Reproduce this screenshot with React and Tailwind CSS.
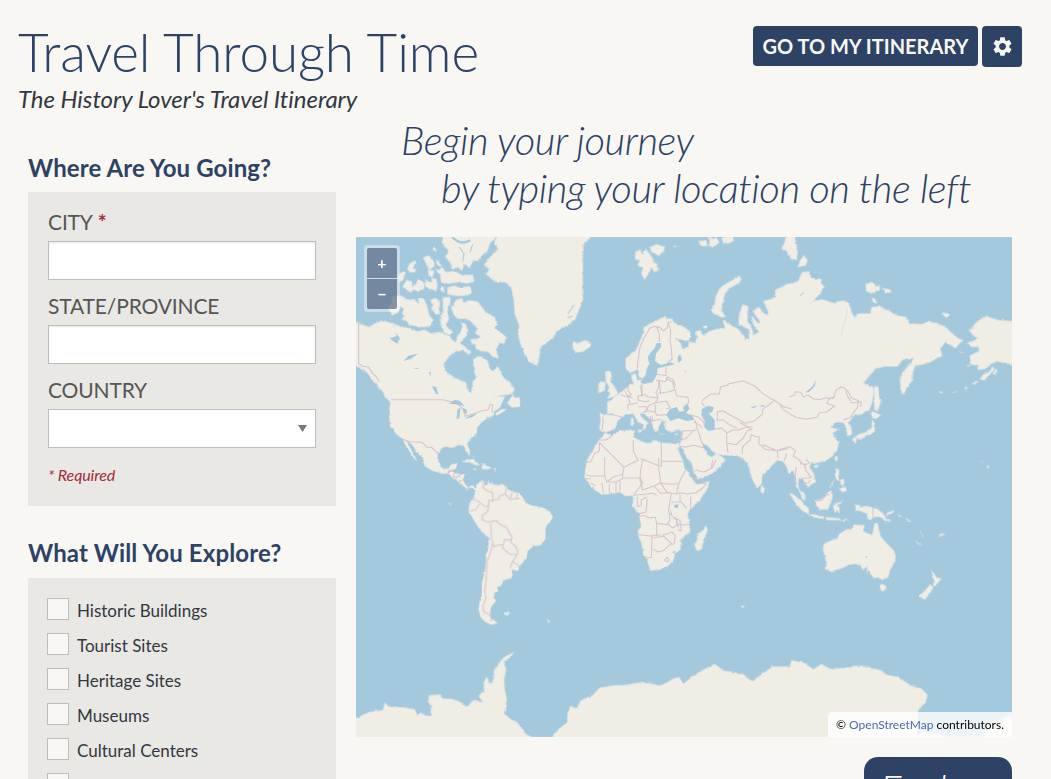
import React from "react";
import { MdSettings } from "react-icons/md";

const LAND = "#f0ede5";
const SEA = "#a5c9dc";

function WorldMap() {
  return (
    <svg viewBox="0 0 1968 1500" className="block h-[500px] w-[656px]" aria-hidden="true">
      <defs>
        <filter id="coast" x="0" y="0" width="1968" height="1500" filterUnits="userSpaceOnUse">
          <feTurbulence type="fractalNoise" baseFrequency="0.07" numOctaves="2" seed="4" />
          <feDisplacementMap in="SourceGraphic" scale="8" xChannelSelector="R" yChannelSelector="G" />
        </filter>
      </defs>
      <rect width="1968" height="1500" fill={SEA} />

      <g filter="url(#coast)" fill={LAND} stroke={LAND} strokeWidth="1" strokeLinejoin="round">
        {/* Canada, Greenland and the Arctic islands */}
        <path d="M-10 256L8 256 22 264 40 270 52 262 78 250 88 254 100 257 118 262 140 270 165 275 185 284 205 278 225 290 245 286 262 288 280 298 292 312 300 316 303 300 312 290 320 270 315 255 330 262 333 285 325 305 310 318 335 335 345 345 340 352 320 340 300 342 275 360 263 385 268 403 300 425 330 437 334 460 345 470 350 435 360 422 354 395 352 368 365 358 380 360 393 368 400 390 410 402 425 388 434 408 446 426 460 434 475 455 470 470 440 475 410 480 395 500 390 520 100 520 104 496 90 482 80 466 70 455 60 440 48 428 36 410 22 396 -10 382Z" />
        <path d="M430-10L415 12 426 36 402 60 384 84 402 96 388 110 402 122 420 134 450 136 466 154 474 190 476 230 490 266 486 290 492 316 506 350 520 374 543 386 548 368 555 328 572 316 590 304 602 282 632 266 656 250 680 190 680-10Z" />
        <path d="M262-10L258 20 278 40 268 60 284 78 288 96 305 90 318 100 326 80 340 92 352 70 368 72 380 52 392 45 402 20 418 0 425-10Z" />
        <path d="M252 92l20 14 24-4 20 12 34 0 4 20-20 4-30-2-30 4-20-14zM275 152l20-6 14 6 34-4 4 22-22 6-26 0-24-4zM254 122l14 4 0 14-12-4zM254 148l12 4 0 14-12-6z" />
        <path d="M205 60l10-4 16 14 4 18-14 8-12-16zM240 70l10 4 8 14-14-4zM233 30l8 4-2 10-8-6zM154 96l8-18 14-6 4 8-10 12 10 12-18 2zM218 96l16 6-4 18-12-4zM240 96l18 6 2 8-14-2z" />
        <path d="M132 108l14-2-4 22-14 10 0-18zM140 148l12-18 16 4 0 16 14-10 4-14 18 14 0 16-16 8-14-6-14 6zM208 128l12 8 10-2-4-12 14 4 4 20-4 16-12-6-14-4-8-12z" />
        <path d="M96 212l10-14 4-20 26-2 12 10-14 22-8 18-16 10zM132 204l18-16 24 0 16 14-4-20 16 2 10 20 6 26 12 18-6 18-20 4-24-2-20-6-8-10-16-6 10-8-8-10 6-12z" />
        <path d="M222 190l18-6 12 10-4 22 4 14-12 2-14-18 6-10zM260 182l22-2 0 22-8 18 4 26-8 16 8 14 12 8-8 10-18-8-10-22 2-26 6-20z" />
        <path d="M292 202l10-14 16-4 4 14 16-8 26 4 12 14 14 18 26 16 6 22-8 8 22 16 16 14-8 18-14-4-10 22-2 22-10-2-18-22-20-12-22-4-4-14 20 2 10-10-16-8 6-16-20-22-16-8-22 2-12-12-8-22z" />
        <path d="M360 318l22 8 18 12 20 4 8 22-14-4-18-16-20-2-18-8z" />
        <path d="M322 270l10 8-4 22-12 12-10-4 6-18zM456 500l16-28 4 14 16 4-4 18-20 4z" />

        {/* Eurasia, north-west */}
        <g transform="translate(660 0)">
          <path d="M164 408L150 396 149 365 165 350 180 340 190 315 205 285 202 272 220 262 240 250 265 240 285 246 296 258 320 268 340 282 346 298 332 312 312 306 298 300 312 318 320 336 338 332 338 314 356 318 366 302 358 284 372 280 380 296 400 284 420 276 448 274 440 250 466 266 486 276 500 292 508 306 520 302 516 276 490 262 488 238 500 203 516 208 514 250 526 272 534 294 550 285 532 262 526 235 548 262 552 254 530 222 548 210 574 238 578 226 562 192 595 185 600 158 640 140 680 137 680 530 94 530 94 496 118 492 136 474 152 464 156 448 172 446 168 428 166 414 180 410 184 438 200 442 220 400 200 424 190 420 186 396Z" />
          <path d="M0-10L44-10 40 6 24 18 18 44 4 60 18 82 20 106 2 124 16 142 14 160 4 190-10 200-10-10Z" />
          <path d="M-8 314l14 4 22-8 14 6 2 12-24 16-20 2-12-14zM88 404l14-2 6 20-4 12 14 20 8 16-8 8-24 6 8-14-6-10 4-8-10-20zM68 438l20-4-2 26-20 8 2-14z" />
          <path d="M178 44l14-4 8 10 10-14 8 12 12 16 0 12 12 4 8 20-16 4-8-14-8 18-10 20-12-18 4-14-14-12 4-14-12-4zM222 30l18-8 26 6-2 16-16 12-22-12zM292 28l8-2-2 4zM368 14l22-4 4 16-16 2zM400 8l22-6 8 14-18 14-14-4 4-8zM440 2l30-4 2 14-18 8-14 2zM394 4l10-4 4 8z" />
          <path d="M404 222l12-20 4-26 14-24 24-16 28-16 10 4-4 12-30 16-14 16-8 24-4 26 12 22-12 0-18-8zM384 264l8 2-2 8-8-2z" />
          <path d="M632-5l22 0 8 30 0 44-24-14-6-14-14-4 8-22z" />
        </g>

        {/* Eurasia, north-east, and western Alaska */}
        <g transform="translate(1308 0)">
          <path d="M-20 142L0 142 20 130 30 106 48 104 60 124 86 126 94 150 84 172 52 204 66 192 90 188 130 200 150 190 172 198 178 225 188 242 200 230 235 230 238 212 260 208 290 220 310 235 342 240 352 260 392 262 405 255 435 258 460 270 490 298 510 310 492 333 460 315 444 335 450 356 405 380 370 385 362 405 362 430 345 450 335 472 326 455 324 425 336 402 355 378 368 360 350 368 332 368 316 388 280 388 250 395 214 438 240 448 243 470 232 520-20 520Z" />
          <path d="M680 254L622 250 590 240 575 240 550 258 544 270 530 278 546 298 560 304 526 318 540 330 560 328 562 342 534 356 536 382 560 384 556 398 578 396 600 380 620 372 640 380 680 382Z" />
          <path d="M-4 0l8 30 12 10-4 26-16 0zM18 90l8-22 10-14 10 18-6 14zM222 140l18-4 10 8 14 2-2 14-20 10-20-8zM272 154l22 4 4 8-18 0zM240 182l10 6 6 10-12-2zM448 232l16-4 10 6-10 8zM502 344l12 4-8 2zM246 452l10 0 2 30 8 10-8 30-10-4z" />
          <path d="M562 424l14-12 18-10 6-12 6 8-18 20-12 12zM604 408l6-12 6 4-4 14zM540 440l14-6 6 2-14 6zM518 454l10-4-6 8zM528 384l8 2-8 2zM480 466l8-2 6-2-8 4zM440 464l14 2-8 2z" />
        </g>

        {/* United States, Central America, Caribbean and South America */}
        <g transform="translate(0 489)">
          <path d="M104-10L106 10 100 50 103 80 124 105 140 116 148 132 160 152 172 172 182 182 170 158 160 140 150 120 168 134 182 154 202 176 206 198 230 212 260 221 278 220 286 230 300 236 306 246 320 256 332 266 345 262 355 268 358 290 368 278 350 256 336 263 325 250 320 240 325 224 312 222 298 220 290 212 300 204 304 190 285 193 278 206 262 207 250 196 244 168 250 150 265 140 290 143 310 134 325 138 330 154 341 166 341 150 332 130 345 115 365 100 362 85 375 68 398 52 415 44 412 36 432 22 446-10Z" />
          <path d="M358 265L366 252 384 243 386 260 396 246 404 252 430 256 440 252 452 266 470 276 492 280 505 300 508 308 525 316 556 322 580 334 590 350 584 364 568 384 568 410 556 434 532 438 514 454 512 474 496 492 486 512 464 508 470 522 466 534 440 542 438 556 424 560 426 574 416 578 412 592 420 602 404 622 402 642 406 656 424 668 410 674 390 668 374 652 368 628 372 600 378 588 378 550 388 510 392 470 398 440 398 412 376 394 360 370 346 346 338 336 340 312 352 298 358 290Z" />
          <path d="M318 184l16-6 22 4 16 14-16-2-14-8-14 0zM376 202l8-8 18 8 2 4-26 2zM352 206l10 2-4 2zM412 206l8 0-2 4zM444 638l18 0-6 6-10 0zM576 658l8 8-4 2zM278 312l8 0-4 4zM418 40l18-12 16 0-14 10-16 8zM460 0l8-10 22 0 2 30-16-6-16-2zM350 166l4 8zM372 190l10 6z" />
        </g>

        {/* Europe, Middle East, India and Africa */}
        <g transform="translate(642 429)">
          <path d="M118 64L130 70 132 106 90 102 92 120 88 150 106 156 122 152 136 144 140 128 152 112 168 104 184 96 194 108 205 124 222 136 218 150 226 146 230 132 236 130 218 116 206 98 205 86 216 90 226 104 240 116 246 130 255 155 264 152 266 140 274 126 286 122 286 148 306 156 320 152 336 152 332 186 328 196 340 208 350 232 366 252 372 280 380 298 402 292 426 280 450 262 466 240 450 228 440 220 424 232 410 222 396 194 410 194 428 214 450 224 475 226 502 226 518 236 528 246 536 250 540 275 550 305 562 323 575 310 576 286 600 262 622 240 640 246 655 265 670 270 670 0 200 0Z" />
          <path d="M104 160L125 165 150 153 194 150 190 172 202 180 240 193 250 180 275 188 300 190 325 190 328 206 320 200 335 235 345 265 360 285 372 304 380 314 418 304 410 330 385 365 362 385 352 402 358 430 360 455 330 480 332 508 315 520 310 540 290 562 265 568 241 572 235 545 220 520 215 490 204 465 212 430 206 400 189 380 190 346 166 348 150 336 120 342 95 343 70 325 50 302 45 285 50 240 70 210 86 182Z" />
          <path d="M406 438l6 14-10 28-8 28-14 4-6-18 8-14 0-18 16-10zM574 316l10 10-4 12-8-4zM184 114l6 0 0 22-8 0zM200 150l16 0-4 8zM266 162l16 0zM314 162l10-2-8 6zM512 678l12 0-6 5z" />
        </g>

        {/* South-east Asia and Oceania */}
        <g transform="translate(1272 459)">
          <path d="M-10 200L5 200 16 218 26 250 40 240 46 262 48 290 60 304 66 326 76 330 74 312 58 298 54 284 56 262 70 270 82 292 104 276 102 252 88 232 94 216 116 218 150 206 170 184 176 158 162 136 158 126 178 118 150 112 170 96 190 98 200 116 202 138 216 134 214 114 206 96 224 76 248 72 276 40 280-10-10-10Z" />
          <path d="M28 310l14 4 22 20 22 22 0 16-18-8-22-26zM84 374l20 0 28 6 0 6-26-4zM136 382l20 2 26 2 0 4-42 0zM186 392l16-6-8 8zM104 332l20-4 14-14 12-12 8 14-6 24-8 18-24 0-10-10zM162 342l30-8-22 12 8 8 0 16-8-12-4 10-6-16z" />
          <path d="M226 344l14 2 0 8 14-6 22 4 16 6 14 10 14 18 12 10-14-2-18-14-16 0-10 8-12-2 0-14-22-10-12 0zM318 370l22-8 2 4-16 8zM354 372l12 6-8 0zM376 384l16 10-6 0zM406 452l16 12-6-2zM420 420l10 22zM476 438l10-8 6 2-14 8z" />
          <path d="M167 236l10 2-2 24 10 10-14-2-6-14zM182 268l10 6 0 14-10-6zM176 298l20-8 4 12-12 4zM150 290l12-20-8 20zM166 198l8 2-4 14-6-6zM104 224l10 0-4 10-8-4z" />
          <path d="M275 64l16 6 12 6-16 10-14-4zM276 90l8 10 0 24-14 10-20 6-12 8-14-8 20-10 18-4 14-14zM220 142l10 4-4 14-8-8zM236 142l10-2-6 8zM284-10l10 0 4 40-6 30-6-4zM362-6l12 0-6 16z" />
          <path d="M130 462L158 450 172 446 178 432 200 418 216 418 222 404 254 406 248 422 276 438 284 400 292 402 302 440 320 460 344 486 347 510 330 540 324 562 308 568 292 562 278 564 266 542 258 550 264 528 250 540 238 522 210 522 188 534 150 544 138 536 140 518 130 484ZM300 584l18 2-2 12-10 6-6-10zM454 542l10 12 6 10 14 2-18 20-6-2 2-14zM450 586l10 4-12 22-14 16-16-6 10-14z" />
          <path d="M604 214l6 2zM622 226l8 6-8 2z" />
        </g>

        {/* Antarctica */}
        <g transform="translate(0 1149)">
          <path d="M-10 294L8 292 40 276 82 270 86 248 98 260 140 262 176 268 184 290 194 278 206 286 224 288 226 258 216 244 220 226 254 224 258 236 290 238 312 246 334 260 352 240 382 248 368 228 384 212 384 184 394 174 402 192 414 176 414 152 434 124 450 108 474 98 462 112 442 126 450 146 444 180 446 210 452 238 444 280 464 298 484 308 510 344 530 352 588 352 610 326 634 308 634 290 640 262 662 264 676 240 710 226 730 204 776 196 800 196 856 188 914 196 934 188 948 178 966 172 986 188 1040 150 1076 132 1102 152 1160 162 1188 184 1210 168 1250 140 1302 140 1306 122 1342 128 1372 148 1396 132 1420 146 1480 144 1490 138 1530 138 1576 152 1590 164 1626 172 1670 200 1696 206 1714 224 1708 248 1686 270 1682 370-10 370Z" />
          <path d="M1682 352L1700 334 1760 348 1880 352 1900 310 1960 290 1980 300 1980 370 1682 370Z" />
        </g>
      </g>

      {/* Enclosed seas and lakes */}
      <g fill={SEA} stroke="none">
        <path d="M902 318L915 318 915 330 900 350 897 372 915 384 945 376 956 382 930 388 905 394 902 414 890 436 864 441 852 436 868 420 872 395 880 380 875 360 885 345 895 335ZM100 304l22-6-4-12 14 18-8 16-10-6zM142 372l16-16 28-6-22 16zM228 448l10 20 10 6-8-24zM218 406l6 12 0-14zM170 396l20-4-4 4z" />
        <path d="M280 500l16-12 16 4 14 16-26-6zM302 546l2-28 10-8-4 34zM320 512l12 6 0 14-8-6zM326 546l12-8 26-10-14 12z" />
        <path d="M930 534l12-18 20-6 8 14 16-2-6-10 16-10 4 14-10 12 18 8 8 12-24 4-26-8-22 8zM1038 516l18-10 18 4-6 16-10 2 18 22 0 28-18 4-12-10 0-20-10-18zM954 804l14-2-2 12-10-2zM944 818l6 20-6-4zM964 850l6 26-6-10zM1348 466l22-18 10-20-4 20-18 18zM972 350l6 18-10 10-4-16zM986 400l6 4-4 2zM1528 956l6 2-2 6zM1184 510l22-4-14 8zM1208 506l20-2-8 6z" />
        <path d="M285-4q28 32 58 14" fill="none" stroke={SEA} strokeWidth="7" />
        <path d="M1332 176l12-10M654 204l-18 26M650 238l-16 4M310 30l14 20-4 24M350 22l-8 24" fill="none" stroke={SEA} strokeWidth="3" />
        <path d="M1474 216l-2 20-12 36-4 26" fill="none" stroke={SEA} strokeOpacity=".5" strokeWidth="2" />
      </g>

      {/* National borders */}
      <g fill="none" stroke="#c9adc0" strokeOpacity=".65" strokeWidth="3.2" strokeLinejoin="round">
        <path d="M8 258V380L20 388 38 390 48 408 60 418 70 434M106 488H262L300 498 318 512 328 538 348 532 376 522 396 518 402 502 410 504 408 528" />
        <path d="M140 607L162 614 198 616 214 632 226 630 246 650M276 708l6-6 14 0-4 16M290 720l14 0 20-14M306 734l12-4" />
        <g transform="translate(0 489)">
          <path d="M384 246l-4 16 12 10 18 6 0 26-12-4 0 20-14-2-14-12-16-8M410 300l18-2 2-10 18-6 4-16M448 282l14 16 30-2M468 278l-4 18M484 280l-2 16M340 334l20-6 10-16M398 320l-4 16-16 10 2 14 16 6 26-4 8 10 22 10 8 18 8 8-2 12-20-2-4 16-20 2-8 4-8-26-2-44M410 432l-8 30-8 20-4 60-4 30 4 20-10 30 4 14 18 8 4 20M464 418l2 10 16 14 4 20-22 2-22-18-4-12M484 462l-14 22 22 16M470 484l-8 20M276 218l6-8 16 4" />
        </g>
        <g transform="translate(642 429)">
          <path d="M88 180h20l20-14-4-14M88 188l74 74 42-22-14-26 0-34M274 186V258l-6 0-50-20-6-2M274 244h64M48 246h14l12-26 14-6V188M104 232v56H62l-14-4M104 288l6 18 22-16 28-8M162 262l-4 22 0 10h54l6 16-16 20-10 12M218 240l-6 30-2 30 8 30 34-12 20-10-6-44 0-30M272 308l16 4 38 0 10-22 12-22M252 318l20 22 26-2 20 4 12-4 22 4 24-4 18-10 14-16-22-6-10-20-20 0M272 310l20 28M326 312l-6 26M362 350l0 36M330 344l0 22-26 0M304 366l30 0 16 20M190 346l40-4 20-2 10 6M202 350l0 30 12-4 0-16 18-10M204 402l24-6 4-40M208 408h20l8 6 20-2 4 18 32 4 8-16-4-28 4-28 4-20M204 464l36 4 34-4M260 432v32M246 468l-2 64-16 2M250 474l30-6 24 22-24 22-16 4-14-8M278 466l28-10 10 10-4 26-12 0M292 430l16 14 12-8 0-16-12-10M312 412l18 10 4 30-10-2M324 434h34M284 540l8-8 6 8-6 6zM306 518l8-4 0 10M96 308l4 32M118 312l0 28M138 306l0 30M150 304l0 30M62 308l14 10M110 306l28 0 20-10M50 296h12" />
          <path d="M174 6l0 26 10 12-14 6-18-6M216 10l0 34M266 0l0 22-8 16 6 16-30-4-10-6-20 4 0 12 22 6 12-4M264 40l30-4 20-6-6-24-20-10M316 30l4 18 34 4 2 16-14 12M264 54l-8 14-18 8-14 18M256 68l34-4 10 20-12 2M232 92l24 4 0-22M256 94l4 12 28-2M246 106l2 16 26-4M174 48l6 24-8 4 4 12M176 74l28-6M206 80l24 0 4 14-16 4M98 110l2 12-4 28M134 106l20 4M182 2l8 12M240 108l6 20" />
          <path d="M360 104l26 8 14 12 4 14M376 122l6 26-14 4-30 0-4 28M370 124l20 12 6 8M384 150l10 36 10 10M334 180l16-6 20-22M330 198l14 4 26-6 34 8M376 270l26 6 24-12 12-24M424 262l4-22M396 62l26-20 26 0 4-22 22-4 0-4 46-10 20 10 14 6 24 22 24 16 10 4 28 20 24 6M394 66l10 14M442 94l0 26 18 0 18 14 24 10M442 96l16-4 28 16 40 22 28-8 24-20 0-14 22-16 10-8M434 148l20-4 16 14 0 30 4 30M470 160l18-10 18 0 20-8 22-2M472 190l26 4 22-20 12-22 16-4M516 222l2-22 22-20 4-18M544 166l24 6-2 18 20 18 34 4 34-6M580 200l0-6 36 16M622 208l2 26M510 128l20 10 16 12" />
        </g>
        <g transform="translate(660 0)">
          <path d="M184 394l2-24 6-40 12-26 18-32 16-4 14 4 10 10 12-10 2-14 12-4M242 268l8 24 0 22M276 256l8 24-2 30 4 24 2 32-14 12M270 390v26l-34-6M240 430l30 4 4-14 18 8 6 20M146 462l10 16 14 6M194 446l4 30M250 434l4 36" />
        </g>
        <g transform="translate(1308 0)">
          <path d="M-10 480L8 474 10 464 26 466 34 480 48 474 66 486 84 488 100 482 124 484 132 460 146 450 160 454 166 476 180 498 208 494 206 510" />
        </g>
        <g transform="translate(1272 459)">
          <path d="M0 42l8 16 26 16 14 8 30 6 34-6 6-14 22-2 24-18-24-8 6-12 18-6M202 0l12 24 22 8-4 20-20 28M190 90l28-10M-4 180l20-6 14-4 16 12-6 16 16 10 8 10M20 190l-8 24M48 230l-2 32 4 22M60 216l14 10 4 16 16 20-24 4M78 208l10 10-14 8M60 222l16 0M68 262l-2 14 18 4 8-10M108 334l18-4 12-16 12 0M279 352v36" />
        </g>
      </g>
    </svg>
  );
}

function TextField({ label, required }) {
  return (
    <label className="flex flex-col">
      <span className="h-[37px] pt-[5px] text-[21px] leading-[26px] tracking-[-0.15px] text-[#555] uppercase">
        {label}
        {required && <span className="font-bold text-[#a42c3a]"> *</span>}
      </span>
      <input className="h-[39px] w-full border border-[#bdbdbb] bg-white px-2 shadow-[inset_0_1px_2px_rgba(0,0,0,0.1)] outline-none" />
    </label>
  );
}

const categories = [
  "Historic Buildings",
  "Tourist Sites",
  "Heritage Sites",
  "Museums",
  "Cultural Centers",
  "Monuments",
];

export default function App() {
  return (
    <div className="h-[779px] w-[1051px] overflow-hidden bg-[#f8f7f3] font-['Lato',sans-serif] text-[#333740] [font-variant-ligatures:none]">
      <header className="flex h-[120px] items-start justify-between pr-[29px] pl-[18px]">
        <div className="pt-[21px]">
          <h1 className="h-[63px] text-[53px] leading-[62px] font-light tracking-[-0.1px] whitespace-nowrap text-[#2d4265]">Travel Through Time</h1>
          <p className="text-[24px] leading-[30px] tracking-[-0.05px] italic">The History Lover's Travel Itinerary</p>
        </div>
        <div className="flex items-start gap-1 pt-[26px]">
          <button className="h-10 w-[225px] rounded-[4px] bg-[#2d4265] text-[20px] leading-[40px] font-bold whitespace-nowrap text-[#f8f7f3]">
            GO TO MY ITINERARY
          </button>
          <button className="flex h-[41px] w-10 items-center justify-center rounded-[4px] bg-[#2d4265] text-[#f8f7f3]" aria-label="Settings">
            <MdSettings size={23} />
          </button>
        </div>
      </header>

      <main className="flex gap-5 pl-7">
        <aside className="w-[308px] pt-[32px]">
          <h2 className="h-10 text-[24px] leading-[32px] font-bold tracking-[0.1px] text-[#2d4265]">Where Are You Going?</h2>
          <section className="flex h-[314px] flex-col gap-2 bg-[#e9e8e4] px-5 pt-3">
            <TextField label="City" required />
            <TextField label="State/Province" />
            <div className="flex flex-col">
              <span className="h-[37px] pt-[5px] text-[21px] leading-[26px] tracking-[-0.15px] text-[#555]">COUNTRY</span>
              <div className="flex h-[39px] items-center justify-end border border-[#bdbdbb] bg-white pr-2">
                <svg viewBox="0 0 9 7" className="h-[7px] w-[9px] fill-[#777]"><path d="M0 0h9L4.5 7z" /></svg>
              </div>
            </div>
            <p className="pt-[9px] text-[16px] leading-[20px] tracking-[-0.1px] text-[#a42c3a] italic">* Required</p>
          </section>
          <h2 className="mt-[31px] h-[41px] text-[24px] leading-[32px] font-bold tracking-[0.12px] text-[#2d4265]">What Will You Explore?</h2>
          <section className="bg-[#e9e8e4] pt-5 pl-[19px]">
            {categories.map((name) => (
              <div key={name} className="flex h-[35px] gap-2">
                <span className="size-[22px] border border-[#bdbdbb] bg-[#f8f7f3]" />
                <span className="text-[17px] leading-[26px]">{name}</span>
              </div>
            ))}
          </section>
        </aside>

        <section className="w-[656px]">
          <div className="-mt-1 h-[121px] text-[40px] leading-[48px] font-light tracking-[-0.45px] whitespace-nowrap text-[#2d4265] italic">
            <p className="pl-[45px]">Begin your journey</p>
            <p className="pl-[85px]">by typing your location on the left</p>
          </div>
          <div className="relative h-[500px]">
            <WorldMap />
            <div className="absolute top-2 left-2 flex w-9 flex-col gap-px rounded-[4px] bg-white/40 p-[3px]">
              <button className="h-[30px] rounded-t-[2px] bg-[#2d4265]/55 text-[16px] leading-[30px] font-bold text-white">+</button>
              <button className="h-[30px] rounded-b-[2px] bg-[#2d4265]/55 text-[16px] leading-[30px] font-bold text-white">−</button>
            </div>
            <div className="absolute right-0 bottom-0 h-[25px] w-[184px] rounded-tl-[4px] bg-white/80 text-center text-[12px] leading-[26px] whitespace-nowrap text-black">
              © <a className="text-[#4d67b3]">OpenStreetMap</a> contributors.
            </div>
          </div>
          <button className="mt-5 ml-auto block h-[64px] w-[148px] rounded-[14px] bg-[#2d4265] text-[40px] leading-[57px] font-light tracking-[-0.45px] text-[#f8f7f3] italic">
            Explore
          </button>
        </section>
      </main>
    </div>
  );
}
